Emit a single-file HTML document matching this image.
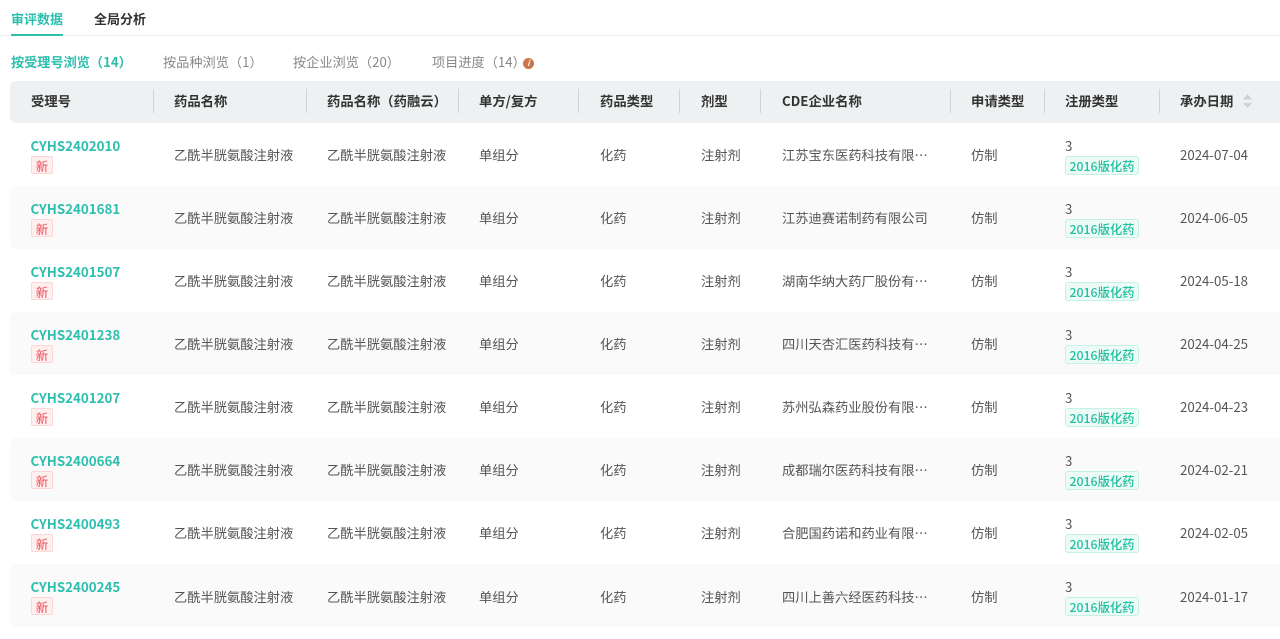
<!DOCTYPE html>
<html lang="zh"><head><meta charset="utf-8">
<style>
html,body{margin:0;padding:0;width:1280px;height:639px;overflow:hidden;background:#fff;font-family:"Noto Sans CJK SC","Liberation Sans",sans-serif;}
.a{position:absolute;white-space:nowrap;line-height:20px;}
.t{font-size:13.25px;color:#555;}
.h{font-size:13.33px;font-weight:700;color:#333;top:91px;}
.sep{position:absolute;top:89px;width:1px;height:24px;background:#ccd5d5;}
.row{position:absolute;left:10px;width:1280px;height:63px;border-radius:6px;}
.id{font-size:13.33px;font-weight:700;color:#2dbfae;left:30.5px;}
.new{position:absolute;left:31px;width:20px;height:16px;border:1px solid #ffd6d8;background:#fff0f0;color:#f04a55;font-size:12.5px;line-height:18px;text-align:center;border-radius:2px;}
.tag{position:absolute;left:1065px;width:72px;height:17px;border:1px solid #c5f0e6;background:#edfbf7;color:#1fbf9f;font-size:12.3px;line-height:18px;text-align:center;border-radius:3px;font-weight:500;white-space:nowrap;}
</style></head><body>
<div class="a" style="left:11px;top:9px;font-size:13px;font-weight:700;color:#2dbfae">审评数据</div>
<div class="a" style="left:94px;top:9px;font-size:13px;font-weight:700;color:#333">全局分析</div>
<div style="position:absolute;left:0;top:35px;width:1280px;height:1px;background:#e8ecec"></div>
<div style="position:absolute;left:11px;top:34px;width:52px;height:2px;background:#2dbfae"></div>
<div class="a" style="left:11px;top:52px;font-size:13.17px;font-weight:700;color:#2dbfae">按受理号浏览（14）</div>
<div class="a" style="left:163px;top:52px;font-size:13.2px;color:#888">按品种浏览（1）</div>
<div class="a" style="left:293px;top:52px;font-size:13.2px;color:#888">按企业浏览（20）</div>
<div class="a" style="left:432px;top:52px;font-size:13.2px;color:#888">项目进度（14）</div>
<div class="a" style="left:523px;top:58px;width:11px;height:11px;border-radius:50%;background:#c9764a;color:#fff;font-size:8px;line-height:11px;text-align:center;font-weight:700;font-style:italic">i</div>
<div style="position:absolute;left:10px;top:81px;width:1280px;height:42px;background:#eef1f2;border-radius:6px"></div>
<div class="sep" style="left:153px"></div><div class="sep" style="left:306px"></div><div class="sep" style="left:458px"></div><div class="sep" style="left:578px"></div><div class="sep" style="left:679px"></div><div class="sep" style="left:760px"></div><div class="sep" style="left:950px"></div><div class="sep" style="left:1044px"></div><div class="sep" style="left:1159px"></div>
<div class="a h" style="left:31px">受理号</div>
<div class="a h" style="left:174px">药品名称</div>
<div class="a h" style="left:327px">药品名称（药融云）</div>
<div class="a h" style="left:479px">单方/复方</div>
<div class="a h" style="left:600px">药品类型</div>
<div class="a h" style="left:701px">剂型</div>
<div class="a h" style="left:782px">CDE企业名称</div>
<div class="a h" style="left:971px">申请类型</div>
<div class="a h" style="left:1065px">注册类型</div>
<div class="a h" style="left:1180px">承办日期</div>
<svg style="position:absolute;left:1242px;top:94px" width="11" height="16"><path d="M5.5 0L10 5.5H1Z" fill="#ccd2d4"/><path d="M1 9H10L5.5 14Z" fill="#ccd2d4"/></svg>

<div class="a id" style="top:136px">CYHS2402010</div><div class="new" style="top:156px">新</div>
<div class="a t" style="left:174px;top:145px">乙酰半胱氨酸注射液</div><div class="a t" style="left:327px;top:145px">乙酰半胱氨酸注射液</div><div class="a t" style="left:479px;top:145px">单组分</div><div class="a t" style="left:600px;top:145px">化药</div><div class="a t" style="left:701px;top:145px">注射剂</div><div class="a t" style="left:782px;top:145px">江苏宝东医药科技有限…</div><div class="a t" style="left:971px;top:145px">仿制</div><div class="a t" style="left:1065px;top:136px">3</div><div class="tag" style="top:156px">2016版化药</div><div class="a t" style="left:1180px;top:145px">2024-07-04</div>

<div class="row" style="top:186px;background:#fafafa"></div>
<div class="a id" style="top:199px">CYHS2401681</div><div class="new" style="top:219px">新</div>
<div class="a t" style="left:174px;top:208px">乙酰半胱氨酸注射液</div><div class="a t" style="left:327px;top:208px">乙酰半胱氨酸注射液</div><div class="a t" style="left:479px;top:208px">单组分</div><div class="a t" style="left:600px;top:208px">化药</div><div class="a t" style="left:701px;top:208px">注射剂</div><div class="a t" style="left:782px;top:208px">江苏迪赛诺制药有限公司</div><div class="a t" style="left:971px;top:208px">仿制</div><div class="a t" style="left:1065px;top:199px">3</div><div class="tag" style="top:219px">2016版化药</div><div class="a t" style="left:1180px;top:208px">2024-06-05</div>

<div class="a id" style="top:262px">CYHS2401507</div><div class="new" style="top:282px">新</div>
<div class="a t" style="left:174px;top:271px">乙酰半胱氨酸注射液</div><div class="a t" style="left:327px;top:271px">乙酰半胱氨酸注射液</div><div class="a t" style="left:479px;top:271px">单组分</div><div class="a t" style="left:600px;top:271px">化药</div><div class="a t" style="left:701px;top:271px">注射剂</div><div class="a t" style="left:782px;top:271px">湖南华纳大药厂股份有…</div><div class="a t" style="left:971px;top:271px">仿制</div><div class="a t" style="left:1065px;top:262px">3</div><div class="tag" style="top:282px">2016版化药</div><div class="a t" style="left:1180px;top:271px">2024-05-18</div>

<div class="row" style="top:312px;background:#fafafa"></div>
<div class="a id" style="top:325px">CYHS2401238</div><div class="new" style="top:345px">新</div>
<div class="a t" style="left:174px;top:334px">乙酰半胱氨酸注射液</div><div class="a t" style="left:327px;top:334px">乙酰半胱氨酸注射液</div><div class="a t" style="left:479px;top:334px">单组分</div><div class="a t" style="left:600px;top:334px">化药</div><div class="a t" style="left:701px;top:334px">注射剂</div><div class="a t" style="left:782px;top:334px">四川天杏汇医药科技有…</div><div class="a t" style="left:971px;top:334px">仿制</div><div class="a t" style="left:1065px;top:325px">3</div><div class="tag" style="top:345px">2016版化药</div><div class="a t" style="left:1180px;top:334px">2024-04-25</div>

<div class="a id" style="top:388px">CYHS2401207</div><div class="new" style="top:408px">新</div>
<div class="a t" style="left:174px;top:397px">乙酰半胱氨酸注射液</div><div class="a t" style="left:327px;top:397px">乙酰半胱氨酸注射液</div><div class="a t" style="left:479px;top:397px">单组分</div><div class="a t" style="left:600px;top:397px">化药</div><div class="a t" style="left:701px;top:397px">注射剂</div><div class="a t" style="left:782px;top:397px">苏州弘森药业股份有限…</div><div class="a t" style="left:971px;top:397px">仿制</div><div class="a t" style="left:1065px;top:388px">3</div><div class="tag" style="top:408px">2016版化药</div><div class="a t" style="left:1180px;top:397px">2024-04-23</div>

<div class="row" style="top:438px;background:#fafafa"></div>
<div class="a id" style="top:451px">CYHS2400664</div><div class="new" style="top:471px">新</div>
<div class="a t" style="left:174px;top:460px">乙酰半胱氨酸注射液</div><div class="a t" style="left:327px;top:460px">乙酰半胱氨酸注射液</div><div class="a t" style="left:479px;top:460px">单组分</div><div class="a t" style="left:600px;top:460px">化药</div><div class="a t" style="left:701px;top:460px">注射剂</div><div class="a t" style="left:782px;top:460px">成都瑞尔医药科技有限…</div><div class="a t" style="left:971px;top:460px">仿制</div><div class="a t" style="left:1065px;top:451px">3</div><div class="tag" style="top:471px">2016版化药</div><div class="a t" style="left:1180px;top:460px">2024-02-21</div>

<div class="a id" style="top:514px">CYHS2400493</div><div class="new" style="top:534px">新</div>
<div class="a t" style="left:174px;top:523px">乙酰半胱氨酸注射液</div><div class="a t" style="left:327px;top:523px">乙酰半胱氨酸注射液</div><div class="a t" style="left:479px;top:523px">单组分</div><div class="a t" style="left:600px;top:523px">化药</div><div class="a t" style="left:701px;top:523px">注射剂</div><div class="a t" style="left:782px;top:523px">合肥国药诺和药业有限…</div><div class="a t" style="left:971px;top:523px">仿制</div><div class="a t" style="left:1065px;top:514px">3</div><div class="tag" style="top:534px">2016版化药</div><div class="a t" style="left:1180px;top:523px">2024-02-05</div>

<div class="row" style="top:564px;background:#fafafa"></div>
<div class="a id" style="top:577px">CYHS2400245</div><div class="new" style="top:597px">新</div>
<div class="a t" style="left:174px;top:587px">乙酰半胱氨酸注射液</div><div class="a t" style="left:327px;top:587px">乙酰半胱氨酸注射液</div><div class="a t" style="left:479px;top:587px">单组分</div><div class="a t" style="left:600px;top:587px">化药</div><div class="a t" style="left:701px;top:587px">注射剂</div><div class="a t" style="left:782px;top:587px">四川上善六经医药科技…</div><div class="a t" style="left:971px;top:587px">仿制</div><div class="a t" style="left:1065px;top:577px">3</div><div class="tag" style="top:597px">2016版化药</div><div class="a t" style="left:1180px;top:587px">2024-01-17</div>
</body></html>
